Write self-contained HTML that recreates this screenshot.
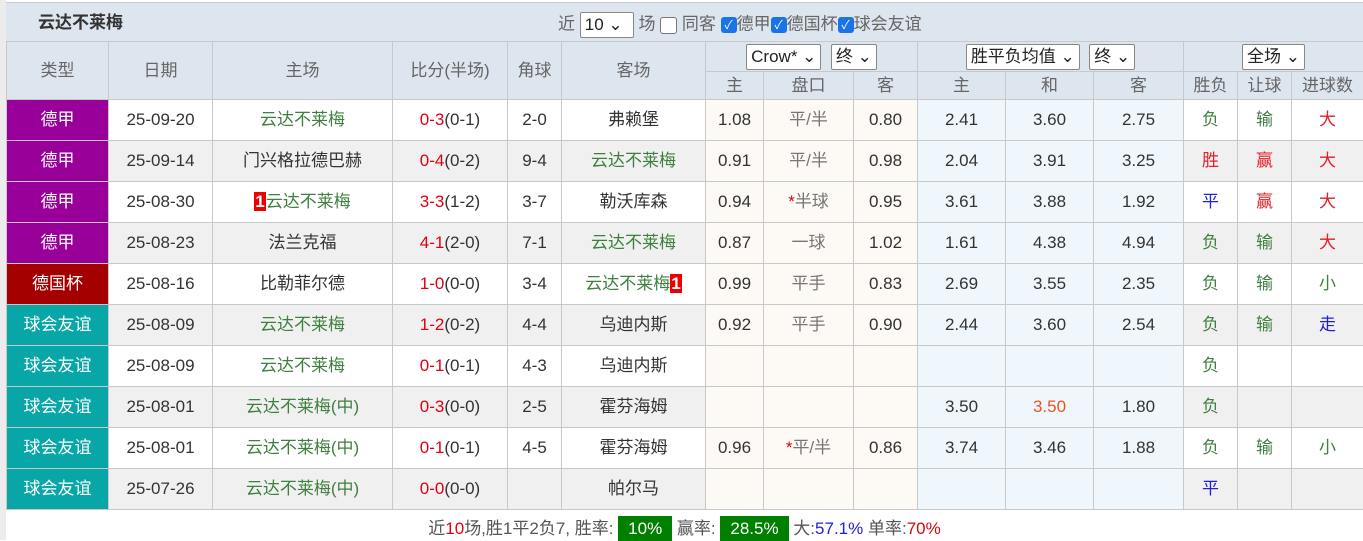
<!DOCTYPE html>
<html><head><meta charset="utf-8"><style>
body{margin:0;background:#fff;width:1363px;height:540px;overflow:hidden;font-family:"Liberation Sans","Noto Sans CJK SC",sans-serif;}
.wrap{position:absolute;left:6px;top:0;width:1357px;}
.side{position:absolute;left:0;top:0;width:6px;height:540px;background:#ececec;}
.title{height:38px;margin-top:2px;background:#dde5ee;border-top:1px solid #c8ccd0;position:relative;color:#333;font-size:17px;line-height:20px;}
.title .t{position:absolute;left:32px;top:10px;color:#333;font-weight:bold;}
.title .f{position:absolute;left:552px;top:9px;color:#666;font-size:17px;}
.sel{display:inline-block;border:1px solid #888;background:#fff;border-radius:2px;padding:0 4px;height:24px;line-height:24px;vertical-align:middle;color:#222;font-size:17px;}
.cb{display:inline-block;width:16px;height:16px;border-radius:3px;background:#1a73e8;color:#fff;font-size:12px;line-height:16px;text-align:center;vertical-align:middle;}
.cbo{display:inline-block;width:15px;height:15px;border:1px solid #777;border-radius:3px;background:#fff;vertical-align:middle;}
table{border-collapse:collapse;table-layout:fixed;width:1357px;font-size:17px;}
td{border:1px solid #c8c8c8;text-align:center;padding:0;color:#333;white-space:nowrap;overflow:hidden;line-height:20px;vertical-align:middle;}
.h td{background:#dde5ee;color:#666;}
tr.d td{height:40px;}
tr.g td{background:#f0f0f0;}
td.p,tr.g td.p{background:#fdf9f5;}
td.b,tr.g td.b{background:#f0f7fc;}
.ty{color:#fff!important;}
.dj{background:#990099!important;}
.dg{background:#a50000!important;}
.yy{background:#08a6a6!important;}
.gr{color:#3f7f3f!important;}
.r{color:#e0000f;}
.rt{color:#e0202a!important;}
.bl{color:#2020e0!important;}
.or{color:#f05020!important;}
.n1{background:#e00;color:#fff;font-weight:bold;padding:0 1px;}
.foot{text-align:center;font-size:17px;color:#555;padding-top:9px;line-height:20px;}
.gb{background:#007f00;color:#fff;padding:3px 10px;}
</style></head><body>
<div class="side"></div>
<div class="wrap">
<div class="title"><span class="t">云达不莱梅</span>
<span class="f">近 <span class="sel" style="width:44px">10 ⌄</span> 场 <span class="cbo"></span> 同客 <span class="cb">✓</span>德甲<span class="cb">✓</span>德国杯<span class="cb">✓</span>球会友谊</span></div>
<table>
<colgroup><col style="width:102px"><col style="width:104px"><col style="width:180px"><col style="width:115px"><col style="width:54px"><col style="width:144px"><col style="width:58px"><col style="width:90px"><col style="width:64px"><col style="width:88px"><col style="width:88px"><col style="width:90px"><col style="width:54px"><col style="width:54px"><col style="width:72px"></colgroup>
<tr class="h" style="height:30px"><td rowspan="2">类型</td><td rowspan="2">日期</td><td rowspan="2">主场</td><td rowspan="2">比分(半场)</td><td rowspan="2">角球</td><td rowspan="2">客场</td>
<td colspan="3"><span class="sel">Crow* ⌄</span> &nbsp;<span class="sel">终 ⌄</span></td><td colspan="3"><span class="sel">胜平负均值 ⌄</span> &nbsp;<span class="sel">终 ⌄</span></td><td colspan="3"><span class="sel">全场 ⌄</span></td></tr>
<tr class="h" style="height:28px"><td>主</td><td>盘口</td><td>客</td><td>主</td><td>和</td><td>客</td><td>胜负</td><td>让球</td><td>进球数</td></tr>
<tr class="d"><td class="ty dj">德甲</td><td>25-09-20</td><td class="gr">云达不莱梅</td><td><span class="r">0-3</span>(0-1)</td><td>2-0</td><td>弗赖堡</td><td class="p">1.08</td><td class="p" style="color:#777">平/半</td><td class="p">0.80</td><td class="b">2.41</td><td class="b">3.60</td><td class="b">2.75</td><td class="gr">负</td><td class="gr">输</td><td class="rt">大</td></tr>
<tr class="d g"><td class="ty dj">德甲</td><td>25-09-14</td><td>门兴格拉德巴赫</td><td><span class="r">0-4</span>(0-2)</td><td>9-4</td><td class="gr">云达不莱梅</td><td class="p">0.91</td><td class="p" style="color:#777">平/半</td><td class="p">0.98</td><td class="b">2.04</td><td class="b">3.91</td><td class="b">3.25</td><td class="rt">胜</td><td class="rt">赢</td><td class="rt">大</td></tr>
<tr class="d"><td class="ty dj">德甲</td><td>25-08-30</td><td class="gr"><span class="n1">1</span>云达不莱梅</td><td><span class="r">3-3</span>(1-2)</td><td>3-7</td><td>勒沃库森</td><td class="p">0.94</td><td class="p" style="color:#777"><span class="r">*</span>半球</td><td class="p">0.95</td><td class="b">3.61</td><td class="b">3.88</td><td class="b">1.92</td><td class="bl">平</td><td class="rt">赢</td><td class="rt">大</td></tr>
<tr class="d g"><td class="ty dj">德甲</td><td>25-08-23</td><td>法兰克福</td><td><span class="r">4-1</span>(2-0)</td><td>7-1</td><td class="gr">云达不莱梅</td><td class="p">0.87</td><td class="p" style="color:#777">一球</td><td class="p">1.02</td><td class="b">1.61</td><td class="b">4.38</td><td class="b">4.94</td><td class="gr">负</td><td class="gr">输</td><td class="rt">大</td></tr>
<tr class="d"><td class="ty dg">德国杯</td><td>25-08-16</td><td>比勒菲尔德</td><td><span class="r">1-0</span>(0-0)</td><td>3-4</td><td class="gr">云达不莱梅<span class="n1">1</span></td><td class="p">0.99</td><td class="p" style="color:#777">平手</td><td class="p">0.83</td><td class="b">2.69</td><td class="b">3.55</td><td class="b">2.35</td><td class="gr">负</td><td class="gr">输</td><td class="gr">小</td></tr>
<tr class="d g"><td class="ty yy">球会友谊</td><td>25-08-09</td><td class="gr">云达不莱梅</td><td><span class="r">1-2</span>(0-2)</td><td>4-4</td><td>乌迪内斯</td><td class="p">0.92</td><td class="p" style="color:#777">平手</td><td class="p">0.90</td><td class="b">2.44</td><td class="b">3.60</td><td class="b">2.54</td><td class="gr">负</td><td class="gr">输</td><td class="bl">走</td></tr>
<tr class="d"><td class="ty yy">球会友谊</td><td>25-08-09</td><td class="gr">云达不莱梅</td><td><span class="r">0-1</span>(0-1)</td><td>4-3</td><td>乌迪内斯</td><td class="p"></td><td class="p"></td><td class="p"></td><td class="b"></td><td class="b"></td><td class="b"></td><td class="gr">负</td><td></td><td></td></tr>
<tr class="d g"><td class="ty yy">球会友谊</td><td>25-08-01</td><td class="gr">云达不莱梅(中)</td><td><span class="r">0-3</span>(0-0)</td><td>2-5</td><td>霍芬海姆</td><td class="p"></td><td class="p"></td><td class="p"></td><td class="b">3.50</td><td class="b or">3.50</td><td class="b">1.80</td><td class="gr">负</td><td></td><td></td></tr>
<tr class="d"><td class="ty yy">球会友谊</td><td>25-08-01</td><td class="gr">云达不莱梅(中)</td><td><span class="r">0-1</span>(0-1)</td><td>4-5</td><td>霍芬海姆</td><td class="p">0.96</td><td class="p" style="color:#777"><span class="r">*</span>平/半</td><td class="p">0.86</td><td class="b">3.74</td><td class="b">3.46</td><td class="b">1.88</td><td class="gr">负</td><td class="gr">输</td><td class="gr">小</td></tr>
<tr class="d g"><td class="ty yy">球会友谊</td><td>25-07-26</td><td class="gr">云达不莱梅(中)</td><td><span class="r">0-0</span>(0-0)</td><td></td><td>帕尔马</td><td class="p"></td><td class="p"></td><td class="p"></td><td class="b"></td><td class="b"></td><td class="b"></td><td class="bl">平</td><td></td><td></td></tr>
</table>
<div class="foot">近<span class="r">10</span>场,胜1平2负7, 胜率: <span class="gb">10%</span> 赢率: <span class="gb">28.5%</span> 大:<span style="color:#2020e0">57.1%</span> 单率:<span class="r">70%</span></div>
</div>
</body></html>
